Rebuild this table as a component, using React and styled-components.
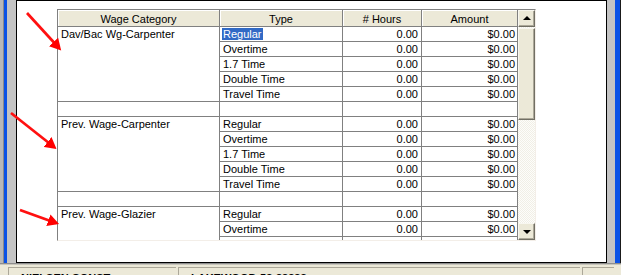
import styled, { createGlobalStyle } from "styled-components";

const GlobalStyle = createGlobalStyle`
  html, body {
    margin: 0;
    padding: 0;
    background: #ffffff;
  }
  body {
    font-family: "Liberation Sans", Arial, sans-serif;
    font-size: 11px;
    color: #000;
  }
`;

const columns = [
  { key: "category", title: "Wage Category", width: 162 },
  { key: "type", title: "Type", width: 123 },
  { key: "hours", title: "# Hours", width: 79 },
  { key: "amount", title: "Amount", width: 96 },
];

const wageTypes = ["Regular", "Overtime", "1.7 Time", "Double Time", "Travel Time"];

const groups = [
  "Dav/Bac Wg-Carpenter",
  "Prev. Wage-Carpenter",
  "Prev. Wage-Glazier",
];

const template = columns.map((c) => `${c.width}px`).join(" ");

function App() {
  return (
    <>
      <GlobalStyle />
      <Screen>
        <Main>
          <EdgeLeft />
          <Panel>
            <Grid>
              <TableView>
                <HeaderRow>
                  {columns.map((c) => (
                    <HeaderCell key={c.key}>{c.title}</HeaderCell>
                  ))}
                </HeaderRow>
                <Body>
                  {groups.map((name, gi) => (
                    <Group key={name}>
                      <CategoryCell>{name}</CategoryCell>
                      {wageTypes.map((t, ti) => (
                        <Row key={t}>
                          <Cell>
                            {gi === 0 && ti === 0 ? <Selected>{t}</Selected> : t}
                          </Cell>
                          <Cell $align="right">0.00</Cell>
                          <Cell $align="right" $pad={2}>$0.00</Cell>
                        </Row>
                      ))}
                      <BlankRow>
                        <Cell />
                        <Cell />
                        <Cell />
                        <Cell />
                      </BlankRow>
                    </Group>
                  ))}
                </Body>
              </TableView>
              <ScrollBar>
                <ScrollButton>
                  <Triangle $dir="up" />
                </ScrollButton>
                <Track>
                  <Thumb />
                </Track>
                <ScrollButton>
                  <Triangle $dir="down" />
                </ScrollButton>
              </ScrollBar>
            </Grid>
          </Panel>
          <EdgeRight />
        </Main>
        <StatusBar>
          <StatusPane $w={168}>NIELSEN CONST.</StatusPane>
          <StatusPane $w={402}>LAKEWOOD-53-33333</StatusPane>
          <StatusPane $w={32} />
        </StatusBar>
        <Arrows width="621" height="275" viewBox="0 0 621 275">
          <defs>
            <marker
              id="head"
              markerWidth="5"
              markerHeight="5"
              refX="3"
              refY="2.5"
              orient="auto"
              markerUnits="strokeWidth"
            >
              <path d="M0,0.2 L4.2,2.5 L0,4.8 Z" fill="#ff0000" />
            </marker>
          </defs>
          <line x1="27" y1="13" x2="59" y2="48" stroke="#ff1010" strokeWidth="2.7" markerEnd="url(#head)" />
          <line x1="11" y1="113" x2="54" y2="147" stroke="#ff1010" strokeWidth="2.7" markerEnd="url(#head)" />
          <line x1="20" y1="210" x2="56" y2="223" stroke="#ff1010" strokeWidth="2.7" markerEnd="url(#head)" />
        </Arrows>
      </Screen>
    </>
  );
}

const Screen = styled.div`
  position: relative;
  width: 621px;
  height: 275px;
  overflow: hidden;
  display: flex;
  flex-direction: column;
`;

const Main = styled.div`
  display: flex;
  height: 263px;
  flex-shrink: 0;
`;

const EdgeLeft = styled.div`
  width: 16px;
  flex-shrink: 0;
  background: linear-gradient(
    to right,
    #b8b8b8 0 3px,
    #8a8a8a 3px 4px,
    #0a52e6 4px 7px,
    #c4c4c4 7px 16px
  );
`;

const EdgeRight = styled.div`
  width: 14px;
  flex-shrink: 0;
  background: linear-gradient(
    to right,
    #c4c4c4 0 8px,
    #0a52e6 8px 13px,
    #1a1a1a 13px 14px
  );
`;

const Panel = styled.div`
  position: relative;
  width: 591px;
  flex-shrink: 0;
  box-sizing: border-box;
  border: 1px solid #000;
  background: #fff;
  padding: 8px 0 0 40px;
`;

const Grid = styled.div`
  display: flex;
  width: 479px;
  height: 232px;
  box-sizing: border-box;
  border: 1px solid;
  border-color: #808080 #f3eee8 #f3eee8 #808080;
  background: #fff;
`;

const TableView = styled.div`
  width: 460px;
  height: 230px;
  overflow: hidden;
  flex-shrink: 0;
`;

const HeaderRow = styled.div`
  display: grid;
  grid-template-columns: ${template};
  height: 17px;
`;

const HeaderCell = styled.div`
  box-sizing: border-box;
  height: 17px;
  background: #ece9d8;
  border-right: 1px solid #808080;
  border-bottom: 1px solid #808080;
  box-shadow: inset 1px 1px 0 #ffffff;
  text-align: center;
  line-height: 16px;
  padding-top: 1px;
  white-space: nowrap;
  overflow: hidden;
`;

const Body = styled.div`
  display: flex;
  flex-direction: column;
`;

const Group = styled.div`
  display: grid;
  grid-template-columns: ${template};
  grid-template-rows: repeat(6, 15px);
`;

const CategoryCell = styled.div`
  grid-column: 1;
  grid-row: 1 / span 5;
  box-sizing: border-box;
  border-right: 1px solid #808080;
  border-bottom: 1px solid #808080;
  padding-left: 3px;
  line-height: 14px;
  white-space: nowrap;
`;

const Row = styled.div`
  display: contents;
`;

const BlankRow = styled.div`
  display: contents;
`;

const Cell = styled.div`
  box-sizing: border-box;
  height: 15px;
  border-right: 1px solid #808080;
  border-bottom: 1px solid #808080;
  line-height: 14px;
  white-space: nowrap;
  overflow: hidden;
  text-align: ${(p) => p.$align || "left"};
  padding: ${(p) => (p.$align === "right" ? `0 ${p.$pad ?? 3}px 0 0` : "0 0 0 3px")};
`;

const Selected = styled.span`
  background: #316ac5;
  color: #fff;
  margin-left: -1px;
  padding: 0 1px;
`;

const ScrollBar = styled.div`
  width: 17px;
  height: 230px;
  flex-shrink: 0;
  display: flex;
  flex-direction: column;
`;

const ScrollButton = styled.div`
  box-sizing: border-box;
  width: 17px;
  height: 17px;
  flex-shrink: 0;
  background: #ece9d8;
  border: 1px solid;
  border-color: #f8f7f0 #716f64 #716f64 #f8f7f0;
  box-shadow: inset -1px -1px 0 #aca899;
  display: flex;
  align-items: center;
  justify-content: center;
`;

const Triangle = styled.span`
  width: 0;
  height: 0;
  border-left: 4px solid transparent;
  border-right: 4px solid transparent;
  ${(p) =>
    p.$dir === "up"
      ? "border-bottom: 4px solid #000; margin-top: -1px;"
      : "border-top: 4px solid #000; margin-top: 1px;"}
`;

const Track = styled.div`
  flex: 1;
  background-color: #fbfaf6;
  background-image: repeating-conic-gradient(#f1efe6 0 25%, #fdfdfb 0 50%);
  background-size: 2px 2px;
`;

const Thumb = styled.div`
  box-sizing: border-box;
  height: 92px;
  margin-top: 1px;
  background: #ece9d8;
  border: 1px solid;
  border-color: #f8f7f0 #716f64 #716f64 #f8f7f0;
  box-shadow: inset -1px -1px 0 #aca899;
`;

const StatusBar = styled.div`
  flex: 1;
  display: flex;
  gap: 2px;
  box-sizing: border-box;
  border-top: 1px solid #8e8e8e;
  box-shadow: inset 0 1px 0 #c8c6bc;
  background: #ece9d8;
  padding: 3px 0 0 8px;
`;

const StatusPane = styled.div`
  width: ${(p) => p.$w}px;
  flex-shrink: 0;
  box-sizing: border-box;
  border-left: 1px solid #aca899;
  border-top: 1px solid #aca899;
  padding: 4px 0 0 12px;
  font-size: 11px;
  font-weight: bold;
  line-height: 13px;
  white-space: nowrap;
  overflow: hidden;
`;

const Arrows = styled.svg`
  position: absolute;
  left: 0;
  top: 0;
  pointer-events: none;
`;

export default App;
